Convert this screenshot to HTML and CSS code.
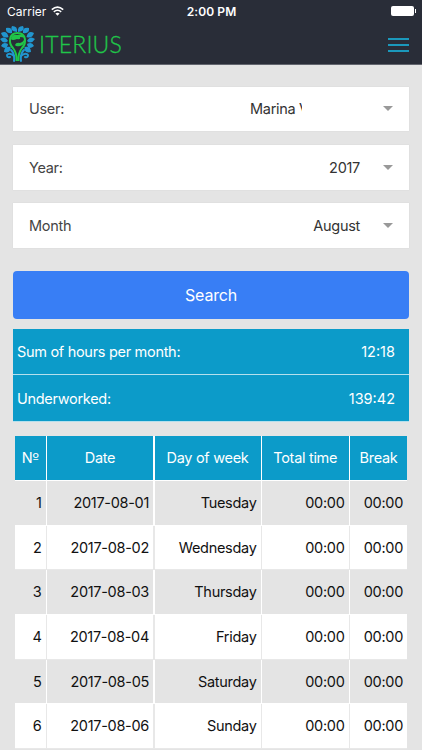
FILE: index.html
```html
<!DOCTYPE html>
<html lang="en">
<head>
  <meta charset="UTF-8">
  <meta name="viewport" content="width=device-width, initial-scale=1">
  <title>Iterius</title>
  <link rel="stylesheet" href="styles.css">
</head>
<body>
  <header class="header">
    <div class="status-bar">
      <div class="carrier">
        <span>Carrier</span>
        <svg class="wifi" viewBox="0 0 13 10" width="13" height="10">
          <path d="M.8 3.6Q6.5-1.4 12.2 3.6M2.8 5.9Q6.5 2.6 10.2 5.9" fill="none" stroke="#fff" stroke-width="1.6"/>
          <path d="M4.4 7.5Q6.5 5.8 8.6 7.5L6.5 9.7z" fill="#fff"/>
        </svg>
      </div>
      <span class="clock">2:00 PM</span>
      <div class="battery"><i class="battery-body"></i><i class="battery-tip"></i></div>
    </div>
    <div class="navbar">
      <div class="logo">
        <svg viewBox="0 0 36 36" width="36" height="36">
          <g fill="#2196d0">
            <path d="M17 6Q9 5 12 0Q18 0 17 6zM18 6Q17 0 23 0Q26 5 18 6z"/>
            <path d="M12 7Q5 8 6 2Q13 1 12 7zM23 7Q22 1 29 2Q30 8 23 7z"/>
            <path d="M8.500 11Q3 13 1 7Q7 4 8.500 11zM26.500 11Q28 4 34 7Q32 13 26.500 11z"/>
            <path d="M8 15Q4 19 0 13Q5 9 8 15zM27 15Q30 9 35 13Q31 19 27 15z"/>
            <path d="M8 18Q7 25 1 20Q3 15 8 18zM27 18Q32 15 34 20Q28 25 27 18z"/>
            <path d="M10.500 21Q11 28 4 26Q4 20 10.500 21zM24.500 21Q31 20 31 26Q24 28 24.500 21z"/>
          </g>
          <g fill="none" stroke="#2196d0" stroke-width="2" stroke-linecap="round">
            <path d="M11 24Q15 28 14 35M24 24Q20 28 21 35"/>
            <path d="M14 30Q9 26 7 29Q7 32 10 31M21 30Q26 26 28 29Q28 32 25 31"/>
          </g>
          <path d="M16.500 35Q17 27 13 22C8 17 9 7 17.500 7S27 17 22 22Q18 27 18.500 35" fill="none" stroke="#20c649" stroke-width="2"/>
          <path d="M11 13Q12 8 17 9Q22 7 24 11.500L20 11Q21 14 17 13Q12 15 11 13zM15 19Q16 16 20 17Q22 17 24 14Q25 19 20 20Q16 21 15 19z" fill="#20c649"/>
        </svg>
        <span class="logo-text">ITERIUS</span>
      </div>
      <div class="menu-button"><i></i><i></i><i></i></div>
    </div>
  </header>

  <main class="content">
    <div class="select">
      <span class="select-label">User:</span>
      <span class="select-value user-value"><span class="user-name">Marina V</span></span>
      <i class="arrow"></i>
    </div>
    <div class="select">
      <span class="select-label">Year:</span>
      <span class="select-value">2017</span>
      <i class="arrow"></i>
    </div>
    <div class="select">
      <span class="select-label">Month</span>
      <span class="select-value">August</span>
      <i class="arrow"></i>
    </div>

    <button class="search">Search</button>

    <div class="summary">
      <div class="summary-row"><span>Sum of hours per month:</span><span class="total">12:18</span></div>
      <div class="summary-row"><span>Underworked:</span><span class="total">139:42</span></div>
    </div>

    <table class="hours">
      <thead>
        <tr><th>N<span class="ordinal">º</span></th><th>Date</th><th>Day of week</th><th>Total time</th><th>Break</th></tr>
      </thead>
      <tbody>
        <tr><td>1</td><td>2017-08-01</td><td>Tuesday</td><td>00:00</td><td>00:00</td></tr>
        <tr><td>2</td><td>2017-08-02</td><td>Wednesday</td><td>00:00</td><td>00:00</td></tr>
        <tr><td>3</td><td>2017-08-03</td><td>Thursday</td><td>00:00</td><td>00:00</td></tr>
        <tr><td>4</td><td>2017-08-04</td><td>Friday</td><td>00:00</td><td>00:00</td></tr>
        <tr><td>5</td><td>2017-08-05</td><td>Saturday</td><td>00:00</td><td>00:00</td></tr>
        <tr><td>6</td><td>2017-08-06</td><td>Sunday</td><td>00:00</td><td>00:00</td></tr>
      </tbody>
    </table>
  </main>
</body>
</html>
```
FILE: styles.css
```css
* {
  box-sizing: border-box;
}
body {
  margin: 0;
  height: 750px;
  overflow: hidden;
  background: #e4e4e4;
  font-family: Inter, "Liberation Sans", sans-serif;
  font-size: 14.5px;
  letter-spacing: -0.3px;
  color: #111;
}

/* header */
.header {
  height: 65px;
  background: #292d38;
  border-bottom: 1px solid #62656e;
}
.status-bar {
  display: grid;
  grid-template-columns: 1fr auto 1fr;
  align-items: center;
  height: 22px;
  padding: 0 6px 0 7px;
  color: #fff;
  font-size: 12px;
}
.carrier {
  display: flex;
  align-items: center;
  gap: 5px;
  letter-spacing: 0;
}
.clock {
  font-weight: 600;
  letter-spacing: 0.1px;
}
.battery {
  display: flex;
  justify-content: flex-end;
  align-items: center;
  gap: 1px;
}
.battery-body {
  width: 23px;
  height: 10px;
  border-radius: 2px;
  background: #fff;
}
.battery-tip {
  width: 1px;
  height: 4px;
  background: #fff;
}
.navbar {
  display: flex;
  justify-content: space-between;
  height: 42px;
  padding: 4px 13px 0 0;
}
.logo {
  display: flex;
  height: 36px;
  gap: 3px;
}
.logo-text {
  font-family: Lato, sans-serif;
  font-weight: 300;
  font-size: 23px;
  line-height: 37px;
  letter-spacing: 0.2px;
  color: #20c649;
  -webkit-text-stroke: 0.3px #20c649;
}
.menu-button {
  display: flex;
  flex-direction: column;
  gap: 4px;
  padding-top: 12px;
}
.menu-button i {
  width: 21px;
  height: 2px;
  background: #1b98bb;
}

/* filters */
.content {
  padding: 21.5px 13px 0;
}
.select {
  display: flex;
  align-items: center;
  height: 44.7px;
  margin-bottom: 13.8px;
  padding: 0 16px;
  background: #fff;
  box-shadow: 0 0 1px #ccc;
  color: #444;
}
.select-value {
  margin-left: auto;
  margin-right: 23px;
  color: #333;
}
.user-value {
  width: 110px;
}
/* long names are cut off */
.user-name {
  display: block;
  width: 52px;
  height: 20px;
  line-height: 20px;
  overflow: hidden;
  white-space: nowrap;
}
.arrow {
  border: 5px solid transparent;
  border-top-color: #999;
  border-bottom: 0;
}
.search {
  display: block;
  width: 100%;
  height: 48px;
  margin: 23px 0 10px;
  padding: 0;
  border: 0;
  border-radius: 4px;
  background: #387ef5;
  color: #fff;
  font-family: inherit;
  font-size: 16px;
  letter-spacing: -0.2px;
}

/* summary */
.summary-row {
  display: flex;
  justify-content: space-between;
  align-items: center;
  height: 46.3px;
  padding: 0 14px 0 4px;
  border-bottom: 1px solid #b5e0ed;
  background: #0c9bc9;
  color: #fff;
}
.total {
  letter-spacing: 0;
}

/* hours table */
.hours {
  display: block;
  margin: 14.4px 2px 0;
}
.hours thead,
.hours tbody {
  display: block;
}
.hours tr {
  display: grid;
  grid-template-columns: 30.5px 106px 106px 86.5px 57px;
  column-gap: 1.5px;
  height: 44.7px;
  padding-bottom: 1px;
  background: #fff;
}
.hours th,
.hours td {
  padding: 1px 4px 0;
  line-height: 42.7px;
  text-align: right;
  white-space: nowrap;
}
.hours th {
  padding: 1px 0 0;
  background: #0c9bc9;
  color: #fff;
  font-weight: 400;
  text-align: center;
}
.ordinal {
  font-family: "DejaVu Sans", sans-serif;
  line-height: 1;
}
.hours tbody tr:nth-child(odd) td {
  background: #e4e4e4;
}
.hours tbody tr:nth-child(even) {
  background: #e8e8e8;
}
.hours tbody tr:nth-child(even) td {
  background: #fff;
}
```
